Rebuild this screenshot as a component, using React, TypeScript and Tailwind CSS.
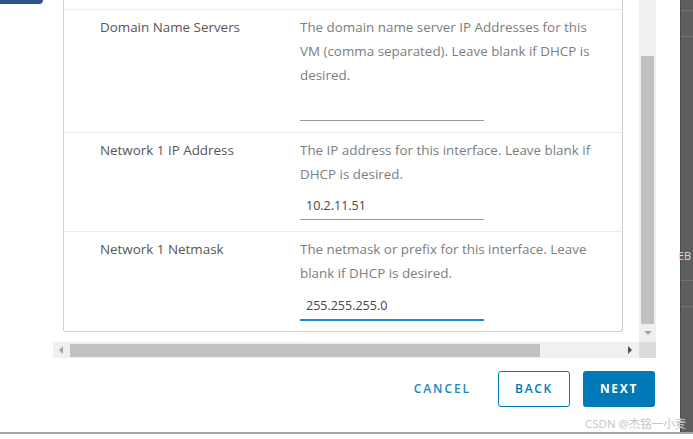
import React from "react";

const font = { fontFamily: '"Open Sans", "Noto Sans CJK SC", sans-serif' };

function Row({
  label,
  desc,
  value,
  active,
  last,
}: {
  label: string;
  desc: string[];
  value: string;
  active?: boolean;
  last?: boolean;
}) {
  return (
    <div className={`flex pt-[5px] pb-[11px] ${last ? "" : "border-b border-[#ececec]"}`}>
      <div className="w-[236px] pl-[36px] text-[13.4px] leading-[24px] text-[#565656] whitespace-nowrap">{label}</div>
      <div className="flex flex-col">
        <div className="text-[13.4px] leading-[24px] text-[#7d7d7d] whitespace-nowrap">
          {desc.map((d, i) => (
            <div key={i}>{d}</div>
          ))}
        </div>
        <div
          className={`w-[184px] pl-[6px] flex items-center text-[12.5px] text-[#454545] ${
            active ? "mt-[9px] border-b-2 border-[#1a8ad4] h-[27px]" : "mt-[8px] border-b border-[#9a9a9a] h-[26px]"
          }`}
        >
          {value}
        </div>
      </div>
    </div>
  );
}

export default function App() {
  return (
    <div className="relative w-[693px] h-[439px] bg-white flex flex-col overflow-hidden" style={font}>
      <div className="flex h-[432px]">
        <div className="w-[680px] flex flex-col">
          <div className="flex">
            <div className="w-[53px]">
              <div className="w-[43px] h-[4px] bg-[#2c5687] rounded-br-[4px]" />
            </div>
            <div className="flex flex-col w-[603px]">
              <div className="flex h-[342px]">
                <div className="w-[586px] pl-[10px]">
                  <div className="w-[560px] h-[332px] border-x border-b border-[#d0d0d0] rounded-b-[3px] flex flex-col overflow-hidden">
                    <div className="h-[10px] shrink-0 border-b border-[#ececec]" />
                    <Row
                      label="Domain Name Servers"
                      desc={[
                        "The domain name server IP Addresses for this",
                        "VM (comma separated). Leave blank if DHCP is",
                        "desired.",
                      ]}
                      value=""
                    />
                    <Row
                      label="Network 1 IP Address"
                      desc={["The IP address for this interface. Leave blank if", "DHCP is desired."]}
                      value="10.2.11.51"
                    />
                    <Row
                      label="Network 1 Netmask"
                      desc={["The netmask or prefix for this interface. Leave", "blank if DHCP is desired."]}
                      value="255.255.255.0"
                      active
                      last
                    />
                  </div>
                </div>
                <div className="w-[17px] bg-[#f0f0f0] flex flex-col items-center">
                  <div className="h-[56px]" />
                  <div className="w-[13px] h-[268px] bg-[#c1c1c1]" />
                  <div className="flex-1 flex items-center justify-center">
                    <svg width="8" height="5" viewBox="0 0 8 5">
                      <path d="M0 0 H8 L4 4 Z" fill="#a3a3a3" />
                    </svg>
                  </div>
                </div>
              </div>
              <div className="flex h-[16px]">
                <div className="w-[586px] bg-[#f0f0f0] flex items-center">
                  <div className="w-[17px] flex justify-center">
                    <svg width="5" height="8" viewBox="0 0 5 8">
                      <path d="M4 0 V8 L0 4 Z" fill="#a3a3a3" />
                    </svg>
                  </div>
                  <div className="w-[470px] h-[13px] bg-[#c1c1c1]" />
                  <div className="flex-1" />
                  <div className="w-[17px] flex justify-center">
                    <svg width="5" height="8" viewBox="0 0 5 8">
                      <path d="M0 0 V8 L4 4 Z" fill="#505050" />
                    </svg>
                  </div>
                </div>
                <div className="w-[17px] bg-[#dcdcdc]" />
              </div>
            </div>
          </div>
          <div className="flex justify-end items-center pr-[25px] pt-[13px] gap-[13px]">
            <button className="h-[36px] px-[14px] text-[12px] font-semibold tracking-[0.16em] text-[#1a85c2]">
              CANCEL
            </button>
            <button className="h-[36px] w-[72px] rounded-[3px] border border-[#0079b8] text-[12px] font-semibold tracking-[0.14em] text-[#0079b8]">
              BACK
            </button>
            <button className="h-[36px] w-[72px] rounded-[3px] bg-[#0079b8] text-[12px] font-bold tracking-[0.14em] text-white">
              NEXT
            </button>
          </div>
        </div>
        <div className="w-[13px] bg-[#5e5e5e] flex flex-col border-l border-[#4a4a4a]">
          <div className="h-[11px] border-b border-[#727272]" />
          <div className="h-[26px] border-b border-[#727272]" />
          <div className="h-[210px]" />
          <div className="h-[18px] text-[11px] leading-[18px] text-[#d8d8d8] overflow-hidden whitespace-nowrap -ml-[3px]">
            EB
          </div>
          <div className="h-[16px] border-b border-[#727272]" />
          <div className="h-[26px] border-b border-[#727272]" />
        </div>
      </div>
      <div className="h-[2px] bg-[#a4a4a4]" />
      <div className="absolute left-[585px] top-[416px] text-[11.5px] leading-[16px] text-[#c4c4c4] whitespace-nowrap">
        CSDN @杰铭一小麦
      </div>
    </div>
  );
}
